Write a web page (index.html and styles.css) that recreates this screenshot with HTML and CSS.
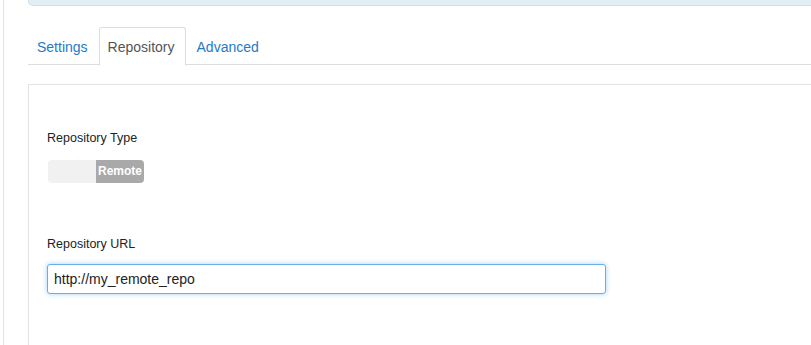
FILE: index.html
```html
<!DOCTYPE html>
<html lang="en">
<head>
  <meta charset="UTF-8" />
  <title>Repository settings</title>
  <link rel="stylesheet" href="styles.css">
</head>
<body>
  <div class="page">
    <div class="notice"></div>

    <ul class="tabs">
      <li><a href="#">Settings</a></li>
      <li class="active"><a href="#">Repository</a></li>
      <li><a href="#">Advanced</a></li>
    </ul>

    <div class="panel">
      <div class="field">
        <label>Repository Type</label>
        <div class="switch">
          <span class="off"></span>
          <span class="on">Remote</span>
        </div>
      </div>

      <div class="field">
        <label>Repository URL</label>
        <input class="url" type="text" value="http://my_remote_repo" />
      </div>
    </div>
  </div>
</body>
</html>
```

FILE: styles.css
```css
html, body {
  margin: 0;
  padding: 0;
  background: #fff;
  font-family: "Liberation Sans", Arial, sans-serif;
  color: #333;
  overflow: hidden;
}
.page {
  margin-left: 3px;
  border-left: 1px solid #e3e3e3;
  padding-left: 24px;
  height: 345px;
  display: flex;
  flex-direction: column;
}
.notice {
  flex-shrink: 0;
  height: 5px;
  background: #e3eef4;
  border: 1px solid #d3e0e8;
  border-top: none;
  border-right: none;
  border-bottom-left-radius: 5px;
}
.tabs {
  flex-shrink: 0;
  list-style: none;
  margin: 21px 0 0;
  padding: 0;
  display: flex;
  border-bottom: 1px solid #ddd;
  height: 37px;
}
.tabs li {
  margin-bottom: -1px;
}
.tabs a {
  display: block;
  font-size: 14px;
  line-height: 20px;
  padding: 9px 10px 8px;
  color: #1f7ac9;
  text-decoration: none;
  border: 1px solid transparent;
  border-radius: 3px 3px 0 0;
}
.tabs li:first-child a {
  padding-left: 8px;
}
.tabs li.active a {
  padding-left: 8px;
  color: #555;
  background: #fff;
  border-color: #ddd #ddd transparent;
}
.panel {
  flex: 1;
  margin-top: 19px;
  border-top: 1px solid #e3e3e3;
  border-left: 1px solid #e3e3e3;
  padding: 45px 0 0 18px;
}
.field {
  margin-bottom: 53px;
}
.field:last-child {
  margin-bottom: 0;
}
.field label {
  display: block;
  font-size: 12.5px;
  line-height: 16px;
  color: #222;
  margin-bottom: 14px;
}
.switch {
  display: flex;
  width: 96px;
  height: 23px;
  margin-left: 1px;
  border-radius: 4px;
  overflow: hidden;
}
.switch span {
  flex: 1;
}
.switch .off {
  background: #f1f1f1;
}
.switch .on {
  background: #a9a9a9;
  color: #fff;
  font-size: 12px;
  font-weight: bold;
  line-height: 23px;
  text-align: center;
}
.url {
  box-sizing: border-box;
  width: 559px;
  height: 30px;
  margin: -2px 0 0;
  padding: 0 6px;
  font-family: "Liberation Sans", Arial, sans-serif;
  font-size: 14px;
  color: #222;
  border: 1px solid #66afe9;
  border-radius: 3px;
  box-shadow: 0 0 5px rgba(102, 175, 233, 0.6);
  outline: none;
}
```
